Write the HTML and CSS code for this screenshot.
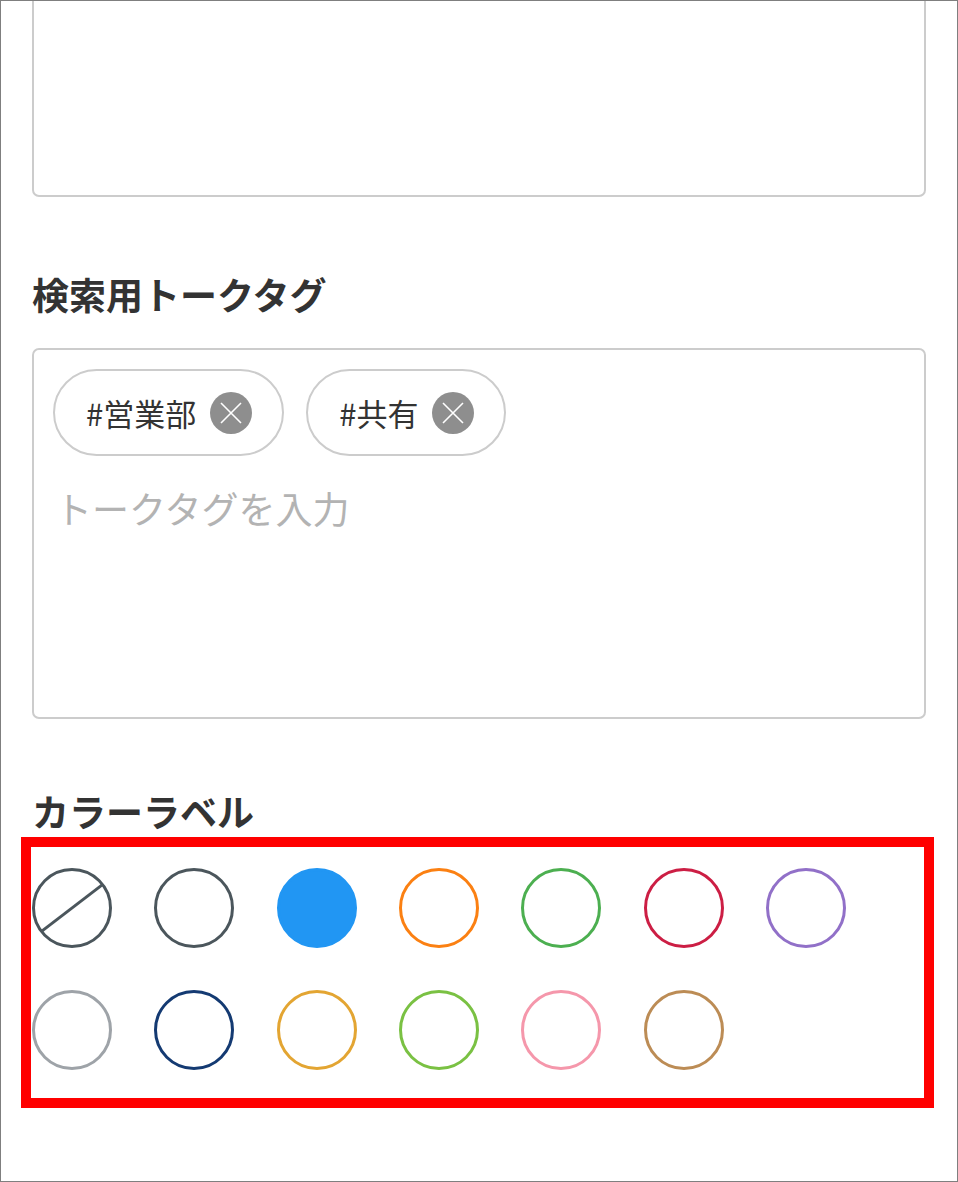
FILE: index.html
```html
<!DOCTYPE html>
<html lang="ja">
<head>
<meta charset="utf-8">
<title>トークタグ</title>
<link rel="stylesheet" href="styles.css">
</head>
<body>
<div class="frame">
  <div class="memo-box"></div>

  <h2 class="section-title tags-title">検索用トークタグ</h2>
  <div class="tag-box">
    <div class="chips">
      <span class="chip"><span class="chip-text">#営業部</span><span class="chip-remove"><svg viewBox="0 0 42 42" width="42" height="42"><path d="M11 11 L31 31 M31 11 L11 31" stroke="#fff" stroke-width="1.6" fill="none"/></svg></span></span>
      <span class="chip"><span class="chip-text">#共有</span><span class="chip-remove"><svg viewBox="0 0 42 42" width="42" height="42"><path d="M11 11 L31 31 M31 11 L11 31" stroke="#fff" stroke-width="1.6" fill="none"/></svg></span></span>
    </div>
    <div class="tag-input">トークタグを入力</div>
  </div>

  <h2 class="section-title color-title">カラーラベル</h2>
  <div class="color-section">
    <div class="color-grid">
      <span class="swatch swatch-none"><svg viewBox="0 0 80 80" width="80" height="80"><circle cx="40" cy="40" r="38.5" fill="none" stroke="#4b565c" stroke-width="3"/><line x1="9.5" y1="63.4" x2="70.5" y2="16.6" stroke="#4b565c" stroke-width="3"/></svg></span>
      <span class="swatch" style="border-color:#4b565c"></span>
      <span class="swatch swatch-selected" style="border-color:#2196f3;background:#2196f3"></span>
      <span class="swatch" style="border-color:#fb8012"></span>
      <span class="swatch" style="border-color:#4caf50"></span>
      <span class="swatch" style="border-color:#cc1e44"></span>
      <span class="swatch" style="border-color:#9170c8"></span>
      <span class="swatch" style="border-color:#9ea3a8"></span>
      <span class="swatch" style="border-color:#143a72"></span>
      <span class="swatch" style="border-color:#e3a532"></span>
      <span class="swatch" style="border-color:#7ac143"></span>
      <span class="swatch" style="border-color:#f597ab"></span>
      <span class="swatch" style="border-color:#bc8c55"></span>
    </div>
    <div class="highlight"></div>
  </div>
</div>
</body>
</html>
```

FILE: styles.css
```css
html, body {
  margin: 0;
  padding: 0;
  background: #ffffff;
}

.frame {
  box-sizing: border-box;
  width: 958px;
  height: 1182px;
  border: 1px solid #7f7f7f;
  padding: 0 31px;
  overflow: hidden;
  position: relative;
  font-family: "Noto Sans CJK JP", "Noto Sans", sans-serif;
  color: #333333;
}

.memo-box {
  box-sizing: border-box;
  height: 236px;
  margin-top: -40px;
  border: 2px solid #cccccc;
  border-radius: 7px;
}

.section-title {
  margin: 0;
  font-size: 37px;
  font-weight: 700;
  line-height: 44px;
  color: #333333;
}

.tags-title {
  margin-top: 75px;
}

.tag-box {
  box-sizing: border-box;
  height: 371px;
  margin-top: 32px;
  border: 2px solid #cccccc;
  border-radius: 7px;
  padding: 19px 19px;
}

.chips {
  display: flex;
  gap: 22px;
}

.chip {
  box-sizing: border-box;
  height: 87px;
  display: inline-flex;
  align-items: center;
  gap: 14px;
  padding: 0 30px 0 31px;
  border: 2px solid #cccccc;
  border-radius: 44px;
}

.chip-text {
  font-size: 31px;
  line-height: 40px;
  color: #333333;
}

.chip-remove {
  width: 42px;
  height: 42px;
  border-radius: 50%;
  background: #8e8e8e;
  display: block;
}

.chip-remove svg {
  display: block;
}

.tag-input {
  margin-top: 30px;
  padding-left: 2px;
  font-size: 37px;
  line-height: 44px;
  color: #b3b3b3;
}

.color-title {
  margin-top: 70px;
}

.color-section {
  position: relative;
  margin-top: 35px;
}

.color-grid {
  display: flex;
  flex-wrap: wrap;
  column-gap: 42.33px;
  row-gap: 42.4px;
  width: 820px;
}

.swatch {
  box-sizing: border-box;
  width: 80px;
  height: 80px;
  border: 3px solid #4b565c;
  border-radius: 50%;
  display: block;
}

.swatch-none {
  border: none;
}

.swatch-none svg {
  display: block;
}

.highlight {
  position: absolute;
  left: -11px;
  top: -31px;
  width: 913px;
  height: 271px;
  box-sizing: border-box;
  border: 10px solid #ff0000;
  pointer-events: none;
}
```
